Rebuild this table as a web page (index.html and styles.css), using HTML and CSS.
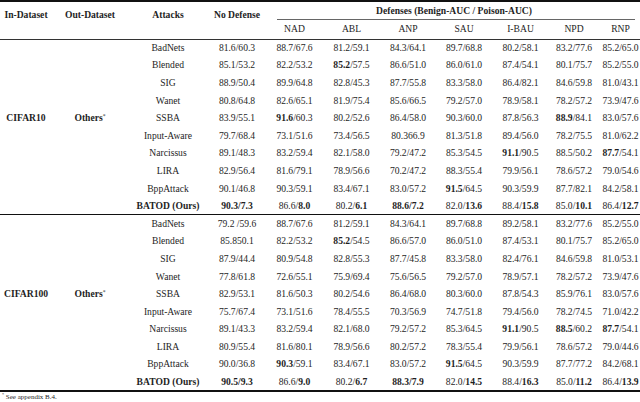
FILE: index.html
```html
<!DOCTYPE html>
<html>
<head>
<meta charset="utf-8">
<link rel="stylesheet" href="styles.css">
</head>
<body>
<table class="res">
<colgroup>
<col class="c-in"><col class="c-out"><col class="c-att"><col class="c-nd">
<col class="c-d1"><col class="c-d2"><col class="c-d3"><col class="c-d4"><col class="c-d5"><col class="c-d6"><col class="c-d7">
</colgroup>
<thead>
<tr class="h1">
<th rowspan="2" class="hs">In-Dataset</th>
<th rowspan="2" class="hs">Out-Dataset</th>
<th rowspan="2" class="hs">Attacks</th>
<th rowspan="2" class="hs">No Defense</th>
<th colspan="7" class="defs">Defenses (Benign-AUC / Poison-AUC)<span class="cmid"></span></th>
</tr>
<tr class="h2">
<th class="dn">NAD</th><th class="dn">ABL</th><th class="dn">ANP</th><th class="dn">SAU</th><th class="dn">I-BAU</th><th class="dn">NPD</th><th class="dn">RNP</th>
</tr>
</thead>
<tbody class="g1">
<tr><td></td><td></td><td>BadNets</td><td>81.6/60.3</td><td>88.7/67.6</td><td>81.2/59.1</td><td>84.3/64.1</td><td>89.7/68.8</td><td>80.2/58.1</td><td>83.2/77.6</td><td>85.2/65.0</td></tr>
<tr><td></td><td></td><td>Blended</td><td>85.1/53.2</td><td>82.2/53.2</td><td><b>85.2</b>/57.5</td><td>86.6/51.0</td><td>86.0/61.0</td><td>87.4/54.1</td><td>80.1/75.7</td><td>85.2/55.0</td></tr>
<tr><td></td><td></td><td>SIG</td><td>88.9/50.4</td><td>89.9/64.8</td><td>82.8/45.3</td><td>87.7/55.8</td><td>83.3/58.0</td><td>86.4/82.1</td><td>84.6/59.8</td><td>81.0/43.1</td></tr>
<tr><td></td><td></td><td>Wanet</td><td>80.8/64.8</td><td>82.6/65.1</td><td>81.9/75.4</td><td>85.6/66.5</td><td>79.2/57.0</td><td>78.9/58.1</td><td>78.2/57.2</td><td>73.9/47.6</td></tr>
<tr><td class="ds">CIFAR10</td><td class="od">Others<sup>*</sup></td><td>SSBA</td><td>83.9/55.1</td><td><b>91.6</b>/60.3</td><td>80.2/52.6</td><td>86.4/58.0</td><td>90.3/60.0</td><td>87.8/56.3</td><td><b>88.9</b>/84.1</td><td>83.0/57.6</td></tr>
<tr><td></td><td></td><td>Input-Aware</td><td>79.7/68.4</td><td>73.1/51.6</td><td>73.4/56.5</td><td>80.366.9</td><td>81.3/51.8</td><td>89.4/56.0</td><td>78.2/75.5</td><td>81.0/62.2</td></tr>
<tr><td></td><td></td><td>Narcissus</td><td>89.1/48.3</td><td>83.2/59.4</td><td>82.1/58.0</td><td>79.2/47.2</td><td>85.3/54.5</td><td><b>91.1</b>/90.5</td><td>88.5/50.2</td><td><b>87.7</b>/54.1</td></tr>
<tr><td></td><td></td><td>LIRA</td><td>82.9/56.4</td><td>81.6/79.1</td><td>78.9/56.6</td><td>70.2/47.2</td><td>88.3/55.4</td><td>79.9/56.1</td><td>78.6/57.2</td><td>79.0/54.6</td></tr>
<tr><td></td><td></td><td>BppAttack</td><td>90.1/46.8</td><td>90.3/59.1</td><td>83.4/67.1</td><td>83.0/57.2</td><td><b>91.5</b>/64.5</td><td>90.3/59.9</td><td>87.7/82.1</td><td>84.2/58.1</td></tr>
<tr><td></td><td></td><td><b>BATOD (Ours)</b></td><td><b>90.3/7.3</b></td><td>86.6/<b>8.0</b></td><td>80.2/<b>6.1</b></td><td><b>88.6/7.2</b></td><td>82.0/<b>13.6</b></td><td>88.4/<b>15.8</b></td><td>85.0/<b>10.1</b></td><td>86.4/<b>12.7</b></td></tr>
</tbody>
<tbody class="g2">
<tr><td></td><td></td><td>BadNets</td><td>79.2 /59.6</td><td>88.7/67.6</td><td>81.2/59.1</td><td>84.3/64.1</td><td>89.7/68.8</td><td>89.2/58.1</td><td>83.2/77.6</td><td>85.2/55.0</td></tr>
<tr><td></td><td></td><td>Blended</td><td>85.850.1</td><td>82.2/53.2</td><td><b>85.2</b>/54.5</td><td>86.6/57.0</td><td>86.0/51.0</td><td>87.4/53.1</td><td>80.1/75.7</td><td>85.2/65.0</td></tr>
<tr><td></td><td></td><td>SIG</td><td>87.9/44.4</td><td>80.9/54.8</td><td>82.8/55.3</td><td>87.7/45.8</td><td>83.3/58.0</td><td>82.4/76.1</td><td>84.6/59.8</td><td>81.0/53.1</td></tr>
<tr><td></td><td></td><td>Wanet</td><td>77.8/61.8</td><td>72.6/55.1</td><td>75.9/69.4</td><td>75.6/56.5</td><td>79.2/57.0</td><td>78.9/57.1</td><td>78.2/57.2</td><td>73.9/47.6</td></tr>
<tr><td class="ds">CIFAR100</td><td class="od">Others<sup>*</sup></td><td>SSBA</td><td>82.9/53.1</td><td>81.6/50.3</td><td>80.2/54.6</td><td>86.4/68.0</td><td>80.3/60.0</td><td>87.8/54.3</td><td>85.9/76.1</td><td>83.0/57.6</td></tr>
<tr><td></td><td></td><td>Input-Aware</td><td>75.7/67.4</td><td>73.1/51.6</td><td>78.4/55.5</td><td>70.3/56.9</td><td>74.7/51.8</td><td>79.4/56.0</td><td>78.2/74.5</td><td>71.0/42.2</td></tr>
<tr><td></td><td></td><td>Narcissus</td><td>89.1/43.3</td><td>83.2/59.4</td><td>82.1/68.0</td><td>79.2/57.2</td><td>85.3/64.5</td><td><b>91.1</b>/90.5</td><td><b>88.5</b>/60.2</td><td><b>87.7</b>/54.1</td></tr>
<tr><td></td><td></td><td>LIRA</td><td>80.9/55.4</td><td>81.6/80.1</td><td>78.9/56.6</td><td>80.2/57.2</td><td>78.3/55.4</td><td>79.9/56.1</td><td>78.6/57.2</td><td>79.0/44.6</td></tr>
<tr><td></td><td></td><td>BppAttack</td><td>90.0/36.8</td><td><b>90.3</b>/59.1</td><td>83.4/67.1</td><td>83.0/57.2</td><td><b>91.5</b>/64.5</td><td>90.3/59.9</td><td>87.7/77.2</td><td>84.2/68.1</td></tr>
<tr><td></td><td></td><td><b>BATOD (Ours)</b></td><td><b>90.5/9.3</b></td><td>86.6/<b>9.0</b></td><td>80.2/<b>6.7</b></td><td><b>88.3/7.9</b></td><td>82.0/<b>14.5</b></td><td>88.4/<b>16.3</b></td><td>85.0/<b>11.2</b></td><td>86.4/<b>13.9</b></td></tr>
</tbody>
</table>
<p class="note"><sup>*</sup> See appendix B.4.</p>
</body>
</html>
```
FILE: styles.css
```css
html, body {
  margin: 0;
  padding: 0;
  background: #ffffff;
  overflow: hidden;
}
body {
  font-family: "Liberation Serif", "Times New Roman", serif;
  color: #1e1e1e;
  font-size: 9.6px;
}
.res {
  border-collapse: collapse;
  table-layout: fixed;
  width: 642px;
  border-top: 2px solid #111;
  border-bottom: 2px solid #111;
}
.c-in { width: 52px; }
.c-out { width: 76px; }
.c-att { width: 80px; }
.c-nd { width: 58px; }
.c-d1 { width: 57px; }
.c-d2 { width: 57px; }
.c-d3 { width: 56px; }
.c-d4 { width: 56px; }
.c-d5 { width: 57px; }
.c-d6 { width: 50px; }
.c-d7 { width: 43px; }
.res th, .res td {
  padding: 0;
  text-align: center;
  white-space: nowrap;
  line-height: 12px;
  overflow: visible;
}
.res th { font-weight: bold; }
.res thead { border-bottom: 1px solid #333; }
.h1 { height: 18px; }
.h2 { height: 19px; }
.hs {
  vertical-align: top;
  padding-top: 7px !important;
}
.defs {
  vertical-align: top;
  padding-top: 3px !important;
}
.cmid {
  display: block;
  height: 0;
  margin: 2px 7px 0 11px;
  border-bottom: 1px solid #666;
}
.dn { font-weight: normal !important; vertical-align: middle; }
.res tbody tr { height: 17.6px; }
.g2 { border-top: 1.5px solid #111; }
.ds, .od { font-weight: bold; }
.od sup, .note sup {
  font-size: 60%;
  line-height: 0;
  vertical-align: 3px;
  font-weight: normal;
}
.res b { font-weight: bold; }
.note {
  margin: 0;
  padding: 1px 0 0 2px;
  font-size: 7px;
  line-height: 8px;
}
```
